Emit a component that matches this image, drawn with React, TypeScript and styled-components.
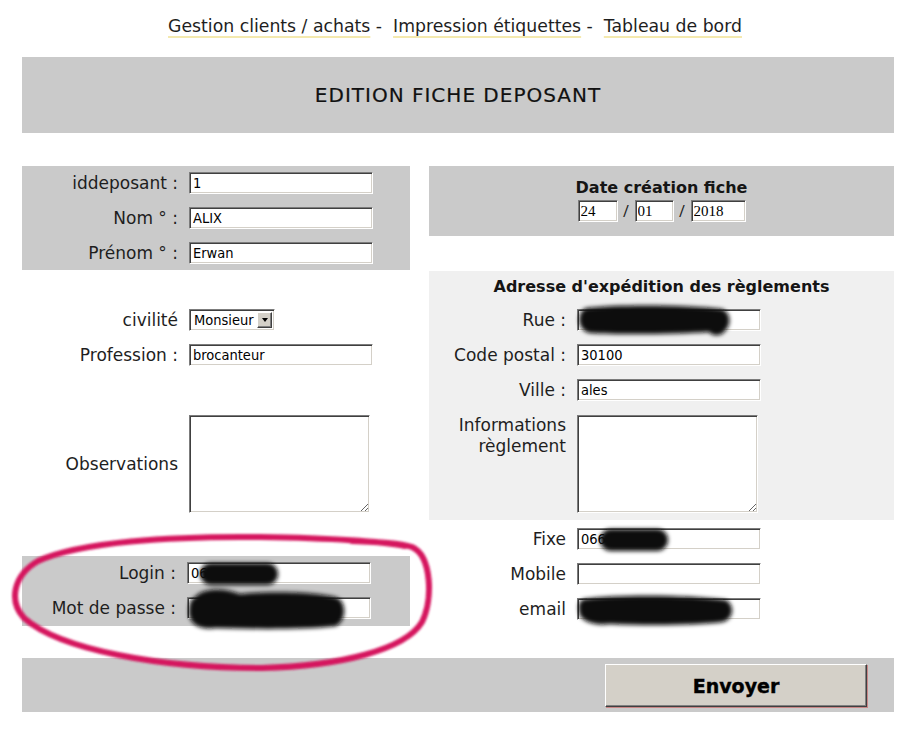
import React from "react";
import styled, { createGlobalStyle } from "styled-components";

const SANS = `"DejaVu Sans", Verdana, sans-serif`;
const FIELD = `"DejaVu Sans Condensed", "DejaVu Sans", Tahoma, sans-serif`;
const SERIF = `"Liberation Serif", "Times New Roman", serif`;

const Global = createGlobalStyle`
  html, body { margin: 0; padding: 0; background: #ffffff; }
  body { font-family: ${SANS}; color: #1e1e1e; }
  * { box-sizing: border-box; }
`;

const Page = styled.div`
  position: relative;
  width: 919px;
  min-height: 735px;
`;

const Content = styled.div`
  width: 872px;
  margin-left: 22px;
`;

const Nav = styled.nav`
  height: 57px;
  padding-top: 16px;
  text-align: center;
  font: 17.3px/20px ${SANS};
  white-space: nowrap;
  color: #1e1e1e;
  padding-right: 6px;
`;

const NavLink = styled.a`
  color: #1e1e1e;
  text-decoration: underline;
  text-decoration-color: #f4e9ae;
  text-decoration-thickness: 2px;
  text-underline-offset: 4px;
`;

const Header = styled.header`
  height: 76px;
  background: #cacaca;
  display: flex;
  align-items: center;
  justify-content: center;
  font: 20px/24px ${SANS};
  letter-spacing: 1px;
  color: #111;
  -webkit-text-stroke: 0.2px #111;
`;

const Columns = styled.div`
  display: grid;
  grid-template-columns: 388px 465px;
  column-gap: 19px;
  margin-top: 33px;
  align-items: start;
`;

const Column = styled.div`
  display: flex;
  flex-direction: column;
`;

const Panel = styled.div<{ $tone?: "gray" | "light" | "none"; $mt?: number; $pt?: number; $pb?: number; $gap?: number }>`
  display: flex;
  flex-direction: column;
  gap: ${(p) => p.$gap ?? 13}px;
  margin-top: ${(p) => p.$mt ?? 0}px;
  padding-top: ${(p) => p.$pt ?? 0}px;
  padding-bottom: ${(p) => p.$pb ?? 0}px;
  background: ${(p) => (p.$tone === "gray" ? "#cacaca" : p.$tone === "light" ? "#f0f0f0" : "transparent")};
`;

const Row = styled.div<{ $labelW: number; $align?: "center" | "start"; $mt?: number }>`
  display: grid;
  grid-template-columns: ${(p) => p.$labelW}px auto;
  column-gap: 11px;
  justify-content: start;
  align-items: ${(p) => p.$align ?? "center"};
  margin-top: ${(p) => p.$mt ?? 0}px;
`;

const Label = styled.label`
  text-align: right;
  font: 17px/21px ${SANS};
  color: #1e1e1e;
`;

const SectionTitle = styled.div`
  text-align: center;
  font: bold 16px/20px ${SANS};
  color: #151515;
`;

const insetBorder = `
  border: 1px solid;
  border-color: #7c7c7c #ffffff #ffffff #7c7c7c;
  box-shadow: inset 1px 1px #404040, inset -1px -1px #d4d0c8;
  background: #ffffff;
  outline: none;
  margin: 0;
`;

const TextInput = styled.input<{ $w?: number }>`
  ${insetBorder}
  width: ${(p) => p.$w ?? 184}px;
  height: 22px;
  padding: 0 3px;
  font: 14.5px ${FIELD};
  color: #000;
`;

const DateInput = styled.input<{ $w: number }>`
  ${insetBorder}
  width: ${(p) => p.$w}px;
  height: 22px;
  padding: 0 2px;
  font: 15px ${SERIF};
  color: #000;
`;

const TextArea = styled.textarea`
  ${insetBorder}
  width: 181px;
  height: 98px;
  padding: 2px 3px;
  font: 14px ${FIELD};
  resize: both;
  display: block;
`;

const SelectWrap = styled.div`
  ${insetBorder}
  position: relative;
  width: 86px;
  height: 22px;
`;

const Select = styled.select`
  appearance: none;
  -webkit-appearance: none;
  border: none;
  background: transparent;
  width: 100%;
  height: 100%;
  padding: 0 18px 0 4px;
  font: 14.5px ${FIELD};
  color: #000;
  outline: none;
`;

const SelectArrow = styled.span`
  position: absolute;
  top: 2px;
  right: 2px;
  width: 15px;
  height: 16px;
  background: #d4d0c8;
  border: 1px solid;
  border-color: #ffffff #404040 #404040 #ffffff;
  box-shadow: inset -1px -1px #808080;
  display: flex;
  align-items: center;
  justify-content: center;
  pointer-events: none;
  &::after {
    content: "";
    border-left: 3.5px solid transparent;
    border-right: 3.5px solid transparent;
    border-top: 4px solid #000;
  }
`;

const DateRow = styled.div`
  display: flex;
  justify-content: center;
  align-items: center;
  margin-top: 2px;
`;

const Slash = styled.span`
  width: 17px;
  text-align: center;
  font: 16px/22px "Open Sans", ${SANS};
  color: #222;
`;

const BottomBar = styled.div`
  height: 54px;
  margin-top: 32px;
  background: #cacaca;
  display: flex;
  justify-content: flex-end;
  align-items: flex-start;
  padding: 6px 27px 0 0;
`;

const SubmitButton = styled.button`
  width: 262px;
  height: 43px;
  background: #d4d0c8;
  border: 1px solid;
  border-color: #ffffff #404040 #404040 #ffffff;
  box-shadow: inset -1px -1px #808080, 1px 1px 0 #c98686;
  font: bold 19px ${SANS};
  -webkit-text-stroke: 0.4px #000;
  color: #000;
  padding: 0;
  margin: 0;
`;

const Annotation = styled.svg`
  position: absolute;
  top: 0;
  left: 0;
  pointer-events: none;
`;

export default function App() {
  return (
    <Page>
      <Global />
      <Content>
        <Nav>
          <NavLink href="#">Gestion clients / achats</NavLink>
          {" - \u00a0"}
          <NavLink href="#">Impression étiquettes</NavLink>
          {" - \u00a0"}
          <NavLink href="#">Tableau de bord</NavLink>
        </Nav>
        <Header>EDITION FICHE DEPOSANT</Header>

        <Columns>
          <Column>
            <Panel $tone="gray" $pt={6} $pb={6}>
              <Row $labelW={156}>
                <Label>iddeposant :</Label>
                <TextInput defaultValue="1" />
              </Row>
              <Row $labelW={156}>
                <Label>Nom ° :</Label>
                <TextInput defaultValue="ALIX" />
              </Row>
              <Row $labelW={156}>
                <Label>Prénom ° :</Label>
                <TextInput defaultValue="Erwan" />
              </Row>
            </Panel>

            <Row $labelW={156} $mt={39}>
              <Label>civilité</Label>
              <SelectWrap>
                <Select defaultValue="Monsieur">
                  <option>Monsieur</option>
                  <option>Madame</option>
                </Select>
                <SelectArrow />
              </SelectWrap>
            </Row>
            <Row $labelW={156} $mt={13}>
              <Label>Profession :</Label>
              <TextInput defaultValue="brocanteur" />
            </Row>
            <Row $labelW={156} $mt={49}>
              <Label>Observations</Label>
              <TextArea />
            </Row>

            <Panel $tone="gray" $mt={43} $pt={6} $pb={7}>
              <Row $labelW={154}>
                <Label>Login :</Label>
                <TextInput defaultValue="06" />
              </Row>
              <Row $labelW={154}>
                <Label>Mot de passe :</Label>
                <TextInput type="text" defaultValue="" />
              </Row>
            </Panel>
          </Column>

          <Column>
            <Panel $tone="gray" $pt={12} $pb={14} $gap={0}>
              <SectionTitle>Date création fiche</SectionTitle>
              <DateRow>
                <DateInput $w={40} defaultValue="24" />
                <Slash>/</Slash>
                <DateInput $w={39} defaultValue="01" />
                <Slash>/</Slash>
                <DateInput $w={55} defaultValue="2018" />
              </DateRow>
            </Panel>

            <Panel $tone="light" $mt={35} $pt={6} $pb={7}>
              <SectionTitle>Adresse d'expédition des règlements</SectionTitle>
              <Row $labelW={137} $mt={-1}>
                <Label>Rue :</Label>
                <TextInput defaultValue="" />
              </Row>
              <Row $labelW={137}>
                <Label>Code postal :</Label>
                <TextInput defaultValue="30100" />
              </Row>
              <Row $labelW={137}>
                <Label>Ville :</Label>
                <TextInput defaultValue="ales" />
              </Row>
              <Row $labelW={137} $align="start" $mt={1}>
                <Label>Informations règlement</Label>
                <TextArea />
              </Row>
            </Panel>

            <Panel $mt={8}>
              <Row $labelW={137}>
                <Label>Fixe</Label>
                <TextInput defaultValue="066" />
              </Row>
              <Row $labelW={137}>
                <Label>Mobile</Label>
                <TextInput defaultValue="" />
              </Row>
              <Row $labelW={137}>
                <Label>email</Label>
                <TextInput defaultValue="" />
              </Row>
            </Panel>
          </Column>
        </Columns>

        <BottomBar>
          <SubmitButton type="button">Envoyer</SubmitButton>
        </BottomBar>
      </Content>

      <Annotation width={919} height={735} viewBox="0 0 919 735">
        <defs>
          <filter id="blurK" x="-20%" y="-50%" width="140%" height="200%">
            <feGaussianBlur stdDeviation="2" />
          </filter>
          <filter id="blurR" x="-10%" y="-20%" width="120%" height="140%">
            <feGaussianBlur stdDeviation="1.2" />
          </filter>
        </defs>
        <g fill="#111111" filter="url(#blurK)">
          <path d="M586 308 C620 304 690 305 722 309 C732 313 731 326 725 331 C722 336 713 337 709 332 C680 334 620 335 590 333 C577 331 576 312 586 308 Z" />
          <rect x="600" y="529" width="68" height="22" rx="11" />
          <rect x="200" y="563" width="78" height="22" rx="11" />
          <path d="M195 597 C204 587 226 588 240 594 C270 591 320 592 338 598 C347 604 346 621 336 626 C300 630 250 629 215 628 C199 631 188 622 189 612 C189 604 190 600 195 597 Z" />
          <path d="M584 599 C620 594 690 595 726 600 C735 605 734 619 723 622 C700 625 650 626 610 624 C594 626 579 621 579 611 C578 605 579 601 584 599 Z" />
        </g>
        <path
          d="M352 541 C380 542 400 543 412 547 C432 556 433 600 422 622 C405 650 340 666 262 668 C160 668 60 650 24 618 C8 600 14 575 38 561 C80 542 170 536 260 537 C320 538 380 541 405 546"
          fill="none"
          stroke="#d5195f"
          strokeWidth={6}
          strokeLinecap="round"
          filter="url(#blurR)"
        />
      </Annotation>
    </Page>
  );
}
